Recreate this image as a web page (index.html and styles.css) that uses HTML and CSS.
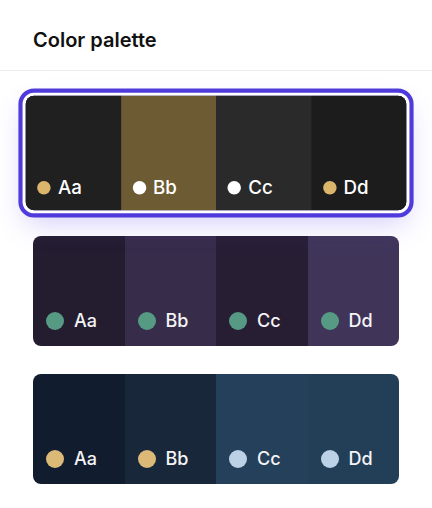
FILE: index.html
```html
<!DOCTYPE html>
<html lang="en">
<head>
<meta charset="utf-8">
<title>Color palette</title>
<link rel="stylesheet" href="styles.css">
</head>
<body>
  <header class="header">
    <h1 class="title">Color palette</h1>
  </header>
  <main class="list">
    <div class="card selected">
      <div class="swatch s1a"><span class="label"><i class="dot gold"></i>Aa</span></div>
      <div class="swatch s1b"><span class="label"><i class="dot white"></i>Bb</span></div>
      <div class="swatch s1c"><span class="label"><i class="dot white"></i>Cc</span></div>
      <div class="swatch s1d"><span class="label"><i class="dot gold"></i>Dd</span></div>
    </div>
    <div class="card">
      <div class="swatch s2a"><span class="label"><i class="dot teal"></i>Aa</span></div>
      <div class="swatch s2b"><span class="label"><i class="dot teal"></i>Bb</span></div>
      <div class="swatch s2c"><span class="label"><i class="dot teal"></i>Cc</span></div>
      <div class="swatch s2d"><span class="label"><i class="dot teal"></i>Dd</span></div>
    </div>
    <div class="card">
      <div class="swatch s3a"><span class="label"><i class="dot sand"></i>Aa</span></div>
      <div class="swatch s3b"><span class="label"><i class="dot sand"></i>Bb</span></div>
      <div class="swatch s3c"><span class="label"><i class="dot ice"></i>Cc</span></div>
      <div class="swatch s3d"><span class="label"><i class="dot ice"></i>Dd</span></div>
    </div>
  </main>
</body>
</html>
```
FILE: styles.css
```css
* { box-sizing: border-box; }
html, body { margin: 0; padding: 0; background: #ffffff; }
body {
  font-family: Inter, "Noto Sans", "Liberation Sans", sans-serif;
  color: #111111;
}
.header {
  height: 71px;
  border-bottom: 1px solid #ededed;
  padding: 25px 33px 0;
}
.title {
  margin: 0;
  font-size: 20px;
  line-height: 30px;
  font-weight: 600;
  color: #111111;
}
.list {
  display: flex;
  flex-direction: column;
  gap: 28px;
  padding: 27px 33px 24px;
}
.card {
  display: grid;
  grid-template-columns: repeat(4, 1fr);
  height: 110px;
  border-radius: 8px;
  overflow: hidden;
}
.card.selected {
  transform: scale(1.04);
  background: linear-gradient(90deg, #202020 25%, #6c5b33 25% 50%, #2a2a2a 50% 75%, #1c1c1c 75%);
  box-shadow: 0 0 0 3px #ffffff, 0 0 0 7px #4f3bdb, 0 12px 28px rgba(96, 80, 230, 0.28);
  position: relative;
  z-index: 1;
}
.swatch {
  display: flex;
  align-items: flex-end;
  padding: 0 0 15px 13px;
}
.label {
  display: flex;
  align-items: center;
  gap: 10px;
  font-size: 18px;
  line-height: 20px;
  font-weight: 500;
  color: #f4f4f6;
}
.dot {
  display: block;
  width: 18px;
  height: 18px;
  border-radius: 50%;
}
.selected .swatch { padding: 0 0 12px 11px; }
.selected .label { gap: 7px; color: #ffffff; }
.selected .dot { width: 13px; height: 13px; }

.gold { background: #dbb56b; }
.white { background: #ffffff; }
.teal { background: #579a84; }
.sand { background: #dcb977; }
.ice { background: #bdd1e6; }

.s1a { background: #202020; }
.s1b { background: #6c5b33; }
.s1c { background: #2a2a2a; }
.s1d { background: #1c1c1c; }

.s2a { background: #241c2f; }
.s2b { background: #372c4a; }
.s2c { background: #281e34; }
.s2d { background: #403559; }

.s3a { background: #111c2e; }
.s3b { background: #18283a; }
.s3c { background: #24405b; }
.s3d { background: #233f58; }
```
